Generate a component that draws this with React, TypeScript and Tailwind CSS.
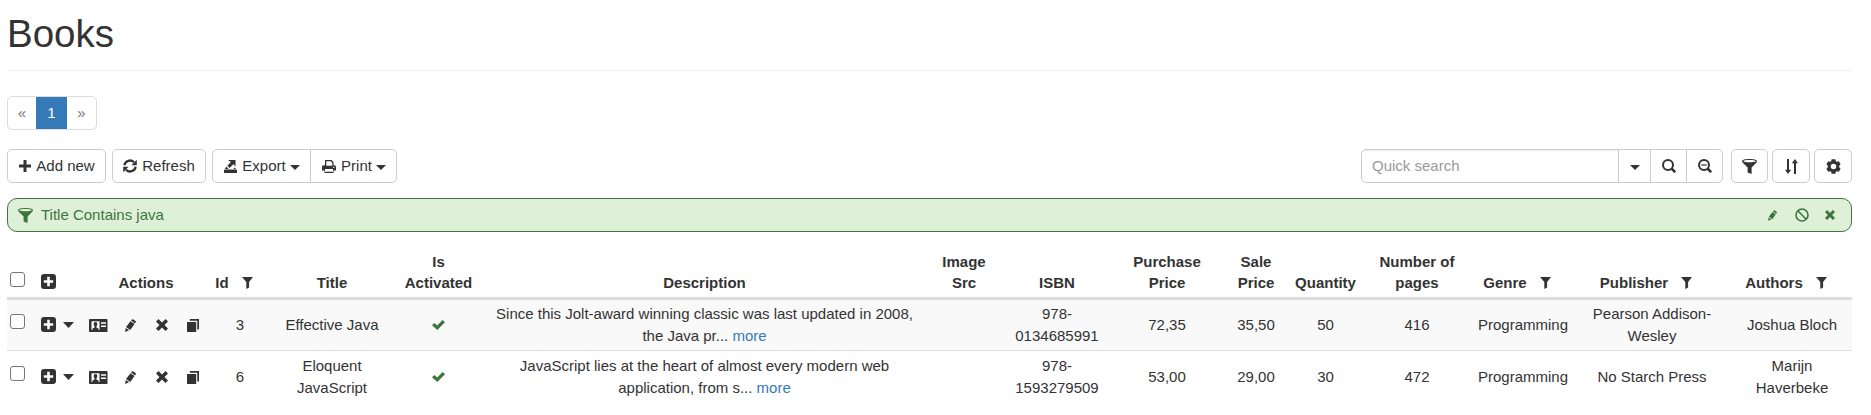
import React from "react";

type P = { d: string; w?: number; h?: number; className?: string; vb?: string };
const G = ({ d, w = 15, h = 15, className = "", vb }: P) => (
  <svg width={w} height={h} viewBox={vb ?? `0 0 ${w} ${h}`} className={`block shrink-0 ${className}`} fill="currentColor" fillRule="evenodd">
    <path d={d} />
  </svg>
);

const Caret = ({ className = "" }: { className?: string }) => <G w={10} h={5} d="M0 0h10L5 5z" className={className} />;
const RowCaret = () => <G w={11} h={6} d="M0 0h11L5.500 6z" />;
const Plus = () => <G w={12} h={12} d="M4.500 0h3v4.500H12v3H7.500V12h-3V7.500H0v-3h4.500z" />;
const Cross = () => <G w={12} h={12} d="M2.500 0 6 3.500 9.500 0 12 2.500 8.500 6 12 9.500 9.500 12 6 8.500 2.500 12 0 9.500 3.500 6 0 2.500z" />;
const pencilPath = "M6.900.6Q7.500-.1 8.300.4L10.500 1.900Q11.200 2.500 10.700 3.300L10 4.400 6 1.600zM5.500 2.300 9.500 5.100 5.300 11 1 8zM.8 8.900 4.200 11.300 0 13z";
const Pencil = () => <G w={11} h={13} d={pencilPath} />;
const Funnel = () => <G w={15} h={15} d="M0 2.200C0 .8 3 0 7.500 0S15 .8 15 2.200L14.500 3.600 9.600 8.600V15L5.600 13.500V8.600L.5 3.600zM1.200 2.200C2 3 4.500 3.300 7.500 3.300S13 3 13.800 2.200C13 1.400 10.500 1.100 7.500 1.100S2 1.400 1.200 2.200z" />;
const SmallFilter = () => <G w={11} h={12} d="M0 0h11L7.100 5v5.500L4.300 12V5z" />;
const Refresh = () => (
  <svg width="14" height="14" viewBox="0 0 14 14" className="block shrink-0" fill="none" stroke="currentColor" strokeWidth="2.300">
    <path d="M1.400 6.200A5.600 5.600 0 0 1 11 3.300M12.600 7.800A5.600 5.600 0 0 1 3 10.700" />
    <path d="M13.800.8v5.400H8.400zM.2 13.200V7.800h5.400z" fill="currentColor" stroke="none" />
  </svg>
);
const Export = () => <G w={13} h={13} d="M4 0h7.500v6.200L9.300 4.200 5.600 7.900 3.400 5.700 6.900 2.100zM2.500 6.500 4.500 9h5l1-1.500L12.300 9.300H.7zM0 9.800h13V13H0z" />;
const Printer = () => <G w={14} h={13} d="M3 0h6.500L11.500 2V5.200h1Q14 5.200 14 6.700V10.500h-2.500V13h-9v-2.500H0V6.700Q0 5.200 1.500 5.200H3zM4.300 1.200v4.500h6V2.700L8.700 1.200zM3 9v2.800h8V9zM11 6.800v1h1.500v-1z" />;
const Magnifier = ({ minus = false }: { minus?: boolean }) => (
  <svg width="14" height="14" viewBox="0 0 14 14" className="block shrink-0" fill="none" stroke="currentColor" strokeWidth="2">
    <circle cx="6" cy="6" r="5" />
    <path d="m9.500 9.500 3.700 3.700" strokeWidth="2.600" />
    {minus && <path d="M3.300 6h5.400" strokeWidth="1.200" />}
  </svg>
);
const Sort = () => <G w={13} h={15} d="M2 0h2v10.800h2.200L3 15 0 10.800h2zM9 15h2V4.200h2L10 0 6.800 4.200H9z" />;
const Gear = () => (
  <svg width="15" height="15" viewBox="0 0 15 15" className="block shrink-0" fill="currentColor" fillRule="evenodd">
    <path d="M5.700.3h3.600l.6 1.900.8.5 2.100-.5 1.800 3.100-1.400 1.500v1.400l1.400 1.500-1.800 3.100-2.100-.5-.8.5-.6 1.900H5.700l-.6-1.900-.8-.5-2.100.5L.4 9.700l1.400-1.500V6.800L.4 5.300l1.800-3.100 2.100.5.8-.5zM7.500 4.700a2.800 2.800 0 1 0 0 5.600 2.800 2.800 0 0 0 0-5.600z" />
  </svg>
);
const Ban = () => (
  <svg width="14" height="14" viewBox="0 0 14 14" className="block shrink-0" fill="none" stroke="currentColor" strokeWidth="1.600">
    <circle cx="7" cy="7" r="6" />
    <path d="m2.800 2.800 8.400 8.400" />
  </svg>
);
const Check = () => <G w={13} h={10} d="M10.600 0 13 2.300 5.300 10 0 5.200 2.300 2.900 5.200 5.400z" />;
const PlusSquare = () => <G w={15} h={15} d="M3 0h9q3 0 3 3v9q0 3-3 3H3q-3 0-3-3V3q0-3 3-3zM6.200 2.800v3.400H2.800v2.600h3.400v3.400h2.600V8.800h3.400V6.200H8.800V2.800z" />;
const Card = () => (
  <svg width="19" height="13" viewBox="0 0 19 13" className="block shrink-0">
    <rect width="18.500" height="13" rx="0.800" fill="#333" />
    <rect x="2.500" y="2.300" width="8" height="8.700" fill="#fff" />
    <path d="M6.500 3c1.300 0 1.800.8 1.800 2S7.800 7 7.400 7.500v1l2.100 1V11h-6V9.500l2.100-1v-1C5.200 7 4.700 6.200 4.700 5s.5-2 1.800-2z" fill="#333" />
    <path d="M12 3.300h5v1.500h-5zM12 6.500h5V8h-5z" fill="#fff" />
  </svg>
);
const Copy = () => <G w={12} h={13} d="M0 3h9.200v10H0zM2.800 0H12v10.500h-1.700V1.800H2.800z" />;

const Box = () => <span className="block size-[15px] rounded-[3px] border border-[#767676] bg-white" />;

const btn = "flex h-[34px] shrink-0 items-center justify-center rounded-[5px] border border-[#ccc] bg-white";

const widths = [26, 48, 130, 58, 126, 87, 445, 74, 112, 108, 70, 69, 114, 98, 160, 120];

const Head = ({ children, filter }: { children: React.ReactNode; filter?: boolean }) => (
  <th className="p-0 pb-[4px] align-bottom leading-[21px] font-bold">
    {filter ? (
      <span className="flex items-center justify-center">
        {children}
        <span className="mr-[12px] ml-[13px] pt-px"><SmallFilter /></span>
      </span>
    ) : children}
  </th>
);

const rows = [
  { id: "3", title: "Effective Java", d1: "Since this Jolt-award winning classic was last updated in 2008,", d2: "the Java pr... ", isbn: "0134685991", buy: "72,35", sale: "35,50", qty: "50", pages: "416", pub: <>Pearson Addison-<br />Wesley</>, author: "Joshua Bloch" },
  { id: "6", title: <>Eloquent<br />JavaScript</>, d1: "JavaScript lies at the heart of almost every modern web", d2: "application, from s... ", isbn: "1593279509", buy: "53,00", sale: "29,00", qty: "30", pages: "472", pub: "No Starch Press", author: <>Marijn<br />Haverbeke</> },
];

export default function App() {
  return (
    <div className="h-[415px] overflow-hidden bg-white px-[7px] font-['Liberation_Sans',Arial,sans-serif] text-[15px] leading-[21.4px] text-[#333]">
      <header className="h-[71px] w-[1845px] border-b border-[#eee] pt-[12px]">
        <h1 className="text-[38.500px] leading-[43px]">Books</h1>
      </header>

      <nav className="mt-[25px] flex h-[34px] w-[90px] overflow-hidden rounded-[5px] border border-[#ddd] text-[#777]">
        <span className="flex w-[28px] items-center justify-center">«</span>
        <span className="-my-px flex w-[31px] items-center justify-center bg-[#337ab7] text-white">1</span>
        <span className="flex w-[29px] items-center justify-center">»</span>
      </nav>

      <div className="mt-[19px] flex h-[34px] w-[1845px]">
        <button className={`${btn} w-[99px] gap-[5px] pl-px`}><Plus />Add new</button>
        <button className={`${btn} ml-[6px] w-[94px] gap-[5px]`}><Refresh />Refresh</button>
        <div className="ml-[6px] flex">
          <button className={`${btn} w-[99px] rounded-r-none pl-px`}><Export /><span className="mr-[4px] ml-[5px]">Export</span><Caret className="mt-[2px]" /></button>
          <button className={`${btn} -ml-px w-[87px] rounded-l-none pl-px`}><Printer /><span className="mr-[4px] ml-[5px]">Print</span><Caret className="mt-[2px]" /></button>
        </div>
        <div className="ml-auto flex">
          <div className={`${btn} w-[258px] justify-start! rounded-r-none pl-[10px] text-[#999] shadow-[inset_0_1px_1px_rgba(0,0,0,0.075)]`}>Quick search</div>
          <button className={`${btn} -ml-px w-[33px] rounded-none`}><Caret className="mt-[3px]" /></button>
          <button className={`${btn} -ml-px w-[37px] rounded-none`}><Magnifier /></button>
          <button className={`${btn} -ml-px w-[37px] rounded-l-none`}><Magnifier minus /></button>
          <button className={`${btn} ml-[8px] w-[37px]`}><Funnel /></button>
          <button className={`${btn} ml-[4px] w-[38px]`}><Sort /></button>
          <button className={`${btn} ml-[4px] w-[38px]`}><Gear /></button>
        </div>
      </div>

      <div className="mt-[15px] flex h-[34px] w-[1845px] items-center rounded-[10px] border border-[#3c763d] bg-[#dff0d8] pr-[16px] pl-[10px] text-[#3c763d]">
        <Funnel />
        <span className="ml-[8px]">Title Contains java</span>
        <div className="ml-auto flex items-center">
          <svg width="9" height="11" viewBox="0 0 11 13" className="mr-[18px] block" fill="currentColor"><path d={pencilPath} /></svg>
          <Ban />
          <svg width="10" height="10" viewBox="0 0 12 12" className="ml-[16px] block" fill="currentColor"><path d="M2.500 0 6 3.500 9.500 0 12 2.500 8.500 6 12 9.500 9.500 12 6 8.500 2.500 12 0 9.500 3.500 6 0 2.500z" /></svg>
        </div>
      </div>

      <table className="mt-[15px] w-[1845px] table-fixed border-separate border-spacing-0 text-center">
        <colgroup>{widths.map((w, i) => <col key={i} style={{ width: w }} />)}</colgroup>
        <thead>
          <tr className="h-[53px] *:border-b-[3px] *:border-[#ddd]">
            <th className="p-0 pb-[10px] pl-[3px] align-bottom"><Box /></th>
            <th className="p-0 pb-[8px] pl-[8px] align-bottom"><PlusSquare /></th>
            <Head>Actions</Head>
            <Head filter>Id</Head>
            <Head>Title</Head>
            <Head>Is<br />Activated</Head>
            <Head>Description</Head>
            <Head>Image<br />Src</Head>
            <Head>ISBN</Head>
            <Head>Purchase<br />Price</Head>
            <Head>Sale<br />Price</Head>
            <Head>Quantity</Head>
            <Head>Number of<br />pages</Head>
            <Head filter>Genre</Head>
            <Head filter>Publisher</Head>
            <Head filter>Authors</Head>
          </tr>
        </thead>
        <tbody>
          {rows.map((r, i) => (
            <tr key={r.id} className={i === 0 ? "h-[51px] bg-[#f9f9f9] *:border-b *:border-[#ddd] *:p-0 *:pb-px" : "h-[52px] *:p-0 *:pb-px"}>
              <td className="align-top"><div className={i === 0 ? "pt-[14px] pl-[3px]" : "pt-[15px] pl-[3px]"}><Box /></div></td>
              <td><div className="flex items-center gap-[7px] pl-[8px]"><PlusSquare /><RowCaret /></div></td>
              <td>
                <div className="flex h-[21px] items-center pt-px pl-[8px]">
                  <span className="flex w-[19px] justify-center"><Card /></span>
                  <span className="ml-[17px] flex w-[11px] justify-center"><Pencil /></span>
                  <span className="ml-[20px] flex w-[12px] justify-center"><Cross /></span>
                  <span className="ml-[19px]"><Copy /></span>
                </div>
              </td>
              <td>{r.id}</td>
              <td>{r.title}</td>
              <td className="text-[#3c763d]"><div className="flex justify-center pt-px"><Check /></div></td>
              <td>{r.d1}<br />{r.d2}<a className="text-[#337ab7]">more</a></td>
              <td></td>
              <td>978-<br />{r.isbn}</td>
              <td>{r.buy}</td>
              <td>{r.sale}</td>
              <td>{r.qty}</td>
              <td>{r.pages}</td>
              <td>Programming</td>
              <td>{r.pub}</td>
              <td>{r.author}</td>
            </tr>
          ))}
        </tbody>
      </table>
    </div>
  );
}
